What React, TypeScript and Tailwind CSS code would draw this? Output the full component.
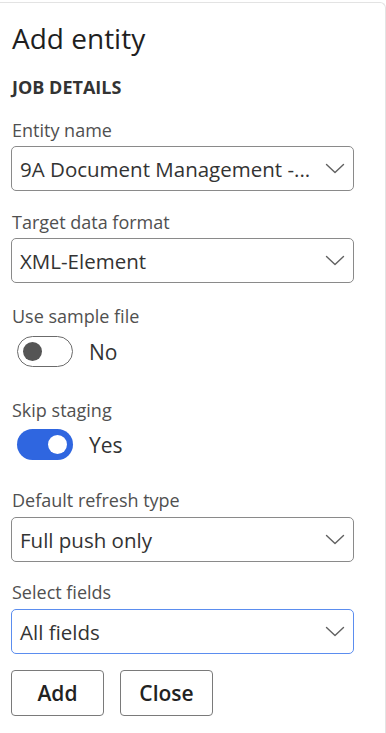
import React from "react";

const font = { fontFamily: '"Open Sans", "Noto Sans", Arial, sans-serif' };

function Chevron() {
  return (
    <svg width="20" height="11" viewBox="0 0 20 11" fill="none" className="shrink-0">
      <path d="M1.5 1.5 L10 9.5 L18.5 1.5" stroke="#616161" strokeWidth="1.4" strokeLinecap="round" strokeLinejoin="round" />
    </svg>
  );
}

function Select({ value, focused }: { value: string; focused?: boolean }) {
  return (
    <div
      className={
        "w-[343px] h-[45px] rounded-[5px] border flex items-center pl-[8px] pr-[8px] " +
        (focused ? "border-[#5b8def]" : "border-[#8a8a8a]")
      }
    >
      <span className="flex-1 text-[20.5px] leading-[28px] text-[#333] whitespace-nowrap pt-[1px]">{value}</span>
      <Chevron />
    </div>
  );
}

function Label({ text, mt }: { text: string; mt: string }) {
  return <div className={"text-[18px] leading-[24px] text-[#505050] " + mt}>{text}</div>;
}

function Toggle({ on }: { on: boolean }) {
  return on ? (
    <div className="w-[56px] h-[31px] rounded-full bg-[#2f66e0] flex items-center justify-end pr-[6px]">
      <div className="w-[19px] h-[19px] rounded-full bg-white" />
    </div>
  ) : (
    <div className="w-[56px] h-[31px] rounded-full border-[1.5px] border-[#6b6b6b] flex items-center pl-[5px]">
      <div className="w-[19px] h-[19px] rounded-full bg-[#555]" />
    </div>
  );
}

export default function App() {
  return (
    <div className="w-[386px] h-[733px] bg-white overflow-hidden" style={font}>
      <div className="mt-[2px] h-[731px] border-t border-r border-[#e3e3e3] rounded-tr-[6px] pl-[11px]">
        <div className="mt-[17px] pl-[1px] text-[28px] leading-[36px] text-[#1f1f1f]">Add entity</div>
        <div className="mt-[19px] pl-[1px] text-[18px] leading-[24px] font-bold text-[#333]">JOB DETAILS</div>

        <Label text="Entity name" mt="mt-[19px] pl-[1px]" />
        <div className="mt-[4px]">
          <Select value="9A Document Management -..." />
        </div>

        <Label text="Target data format" mt="mt-[19px] pl-[1px]" />
        <div className="mt-[4px]">
          <Select value="XML-Element" />
        </div>

        <Label text="Use sample file" mt="mt-[21px] pl-[1px]" />
        <div className="mt-[8px] flex items-center pl-[6px] gap-[16px]">
          <Toggle on={false} />
          <span className="text-[21px] leading-[28px] text-[#333]">No</span>
        </div>

        <Label text="Skip staging" mt="mt-[31px] pl-[1px]" />
        <div className="mt-[7px] flex items-center pl-[6px] gap-[16px]">
          <Toggle on={true} />
          <span className="text-[21px] leading-[28px] text-[#333]">Yes</span>
        </div>

        <Label text="Default refresh type" mt="mt-[28px] pl-[1px]" />
        <div className="mt-[5px]">
          <Select value="Full push only" />
        </div>

        <Label text="Select fields" mt="mt-[18px] pl-[1px]" />
        <div className="mt-[5px]">
          <Select value="All fields" focused />
        </div>

        <div className="mt-[16px] flex gap-[16px]">
          <button className="w-[93px] h-[46px] rounded-[4px] border border-[#7a7a7a] text-[21px] leading-[28px] font-semibold text-[#222]">
            Add
          </button>
          <button className="w-[93px] h-[46px] rounded-[4px] border border-[#7a7a7a] text-[21px] leading-[28px] font-semibold text-[#222]">
            Close
          </button>
        </div>
      </div>
    </div>
  );
}
